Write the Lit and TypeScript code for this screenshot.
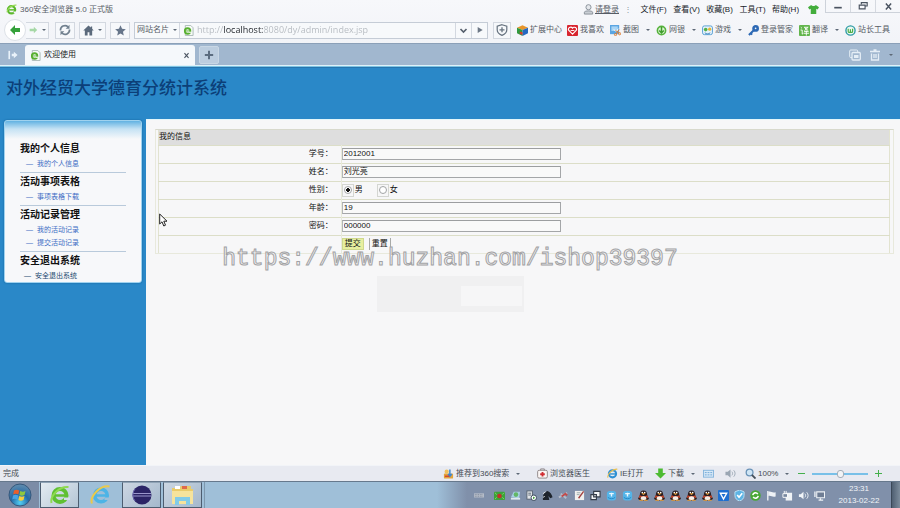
import { LitElement, html, svg, css, nothing, TemplateResult } from "lit";
import { customElement } from "lit/decorators.js";
import { classMap } from "lit/directives/class-map.js";

const icon = (body: unknown, size = 12) =>
  html`<svg width=${size} height=${size} viewBox="0 0 12 12" aria-hidden="true">${body}</svg>`;

const glyphs = {
  browser: svg`<circle cx="6" cy="6.3" r="4" fill="none" stroke="#5cb82c" stroke-width="2.4"/><path d="M2 6.4h8" stroke="#5cb82c" stroke-width="1.6"/><path d="M8.4 8.2h3v2h-3z" fill="#f4f6fa"/><path d="M1 9C2 4 7 .6 11.400 1.200" stroke="#9bdc5a" stroke-width="1.300" fill="none"/>`,
  page: svg`<path d="M2.500 .5h6l2.500 2.500v8.500h-8.500z" fill="#f6faf6" stroke="#a9b8b6"/><circle cx="5" cy="6.500" r="3" fill="#f6faf6" stroke="#58b030" stroke-width="2"/><path d="M2.500 6.500h5" stroke="#58b030"/><path d="M6 7.300h3v1.200H6z" fill="#f6faf6"/>`,
  back: svg`<path d="M1 6l5-5v3h5v4H6v3z" fill="#35a13a"/>`,
  forward: svg`<path d="M11 6L7 2v2.500H2v3h5V10z" fill="#a6d8a6"/>`,
  refresh: svg`<path d="M1.500 6.500A4.500 4.500 0 0 1 9 2.800M10.500 5.500A4.500 4.500 0 0 1 3 9.200" fill="none" stroke="#71808f" stroke-width="1.700"/><path d="M10.500 .8v4H6.700zM1.500 11.200v-4h3.800z" fill="#71808f"/>`,
  home: svg`<path d="M6 .5L.3 6H2v5.500h3V8h2v3.500h3V6h1.700L10 4.200V1.500H8.500v1.300z" fill="#5b6a7c"/>`,
  star: svg`<path d="M6 .4l1.700 3.800 4.100.4-3.100 2.700.9 4.100L6 9.300l-3.600 2.100.9-4.100L.2 4.600l4.100-.4z" fill="#66758a"/>`,
  shield: svg`<path d="M6 .7l4.800 1.600v3.500c0 2.700-2 4.500-4.800 5.600C3.200 10.300 1.200 8.500 1.200 5.800V2.300z" fill="none" stroke="#66727f" stroke-width="1.200"/><path d="M6 3.300v5M3.500 5.800h5" stroke="#66727f" stroke-width="1.300"/>`,
  chevron: svg`<path d="M2 4l4 4 4-4" fill="none" stroke="#555f6c" stroke-width="2.200"/>`,
  play: svg`<path d="M2.500 1.500L10 6l-7.500 4.500z" fill="#6c7785"/>`,
  cube: svg`<path d="M0 3l6-2.700L12 3 6 5.500z" fill="#e8952a"/><path d="M0 3l6 2.500V12L0 9z" fill="#2f9a3e"/><path d="M12 3L6 5.500V12l6-3z" fill="#2468c0"/><path d="M3 7l3 1v3L3 9.500z" fill="#d43c2c"/>`,
  heart: svg`<rect width="12" height="12" rx="1" fill="#d8252f"/><path d="M6 10L2 6a2.200 2.200 0 0 1 4-2.500A2.200 2.200 0 0 1 10 6z" fill="none" stroke="#fff" stroke-width="1.200"/><path d="M4 6h4" stroke="#fff"/>`,
  capture: svg`<rect x="0" y="0" width="10" height="10" fill="#5aa5e2"/><path d="M1.500 1.500h7v5h-7z" fill="#a8d4f4"/><path d="M4 5l3 2 2-3" stroke="#fff" fill="none"/><circle cx="6" cy="10.500" r="1.200" fill="none" stroke="#e07b2c"/><circle cx="10.500" cy="9.500" r="1.200" fill="none" stroke="#e07b2c"/><path d="M6 6l4 3M10 5l-3.500 5" stroke="#e07b2c"/>`,
  bank: svg`<circle cx="6" cy="6" r="4.500" fill="#d9f2cf" stroke="#55b23c" stroke-width="1.700"/><path d="M6 2v6M3.500 6L6 8.700 8.500 6" stroke="#3f9d2c" stroke-width="1.600" fill="none"/>`,
  game: svg`<rect x=".6" y="1" width="10.800" height="9.500" rx="2" fill="#e6f2fb" stroke="#4f9bd2"/><circle cx="4" cy="5" r="2" fill="#54b04a"/><circle cx="8.400" cy="4.500" r="1.700" fill="#e9b534"/><path d="M3 8.500c2 1.500 4 1.500 6 0" stroke="#3c83bb" fill="none"/>`,
  key: svg`<circle cx="8.300" cy="3.700" r="2.300" fill="none" stroke="#2d69b5" stroke-width="2.800"/><path d="M6.300 5.700L1 11M2.500 8.500l2 2" stroke="#2d69b5" stroke-width="2.200" fill="none"/>`,
  translate: svg`<rect width="12" height="12" rx="1" fill="#62b54d"/><path d="M2 2.500l1.200 1M1.700 5.500h1.800V10l1-1M5.500 2.500h4.500L6 6M6 3l4 3M5.500 7h5M5 9h6M8 6v5.500" stroke="#fff" fill="none"/>`,
  webmaster: svg`<circle cx="6" cy="6" r="5" fill="#ecf8f2" stroke="#2c9aa4" stroke-width="1.500"/><path d="M3.500 4v3c0 1.500 2.400 1.500 2.400 0V4.500 7c0 1.500 2.400 1.500 2.400 0V4" fill="none" stroke="#4cae45" stroke-width="1.300"/>`,
  person: svg`<circle cx="6" cy="3.500" r="2.800" fill="#e5e8ec" stroke="#868d96"/><path d="M1.500 11V9c0-2 9-2 9 0v2z" fill="#c9ced4" stroke="#868d96"/>`,
  shirt: svg`<path d="M3.500 1L0 3.500 1.500 6l1.500-.7V11h6V5.300l1.500.7L12 3.500 8.500 1C7.500 2.500 4.500 2.500 3.500 1z" fill="#43ad3c"/>`,
  minimise: svg`<path d="M1.500 8h9" stroke="#4a5360" stroke-width="2"/>`,
  restore: svg`<path d="M4 4V2h7v4H9M1.500 5h7v4.500h-7z" fill="none" stroke="#4a5360" stroke-width="1.400"/>`,
  close: svg`<path d="M2.500 2l7 8M9.500 2l-7 8" stroke="#4a5360" stroke-width="1.900"/>`,
  sidebar: svg`<path d="M1.500 1v10" stroke="#e9f2fa" stroke-width="2"/><path d="M4.500 4.500H7V2l4.500 4L7 10V7.500H4.500z" fill="#e9f2fa"/>`,
  plus: svg`<path d="M6 1v10M1 6h10" stroke="#5b6c80" stroke-width="2.400"/>`,
  windows: svg`<rect x=".7" y="1" width="8" height="7.500" rx="1" fill="none" stroke="#e5eef6"/><rect x="3" y="3.500" width="8.300" height="7.500" rx="1" fill="#a1b7cf" stroke="#e5eef6" stroke-width="1.300"/><path d="M5 6h4.500v3H5z" fill="#e5eef6"/>`,
  trash: svg`<path d="M1 2.500h10M4.500 1h3M2.500 4.500v6.500h7V4.500M5 5v4M7 5v4" stroke="#e5eef6" stroke-width="1.300" fill="none"/>`,
  share: svg`<rect x="1" y="6" width="10" height="5.500" rx="1" fill="#e4a33a"/><circle cx="4" cy="4" r="2.300" fill="#f0c05a"/><path d="M7.500 1.500v7M5.500 6.500l2 2.500 2-2.500" stroke="#3e86cf" stroke-width="1.600" fill="none"/><path d="M2 9h5" stroke="#d0442f" stroke-width="1.500"/>`,
  doctor: svg`<rect x=".7" y="2.500" width="10.600" height="8.500" rx="1.500" fill="#fbf5f4" stroke="#8d8587"/><path d="M4 2.500V1h4v1.500" stroke="#8d8587" fill="none"/><path d="M6 4.300v5M3.500 6.800h5" stroke="#d02d33" stroke-width="2"/>`,
  ie: svg`<circle cx="6" cy="6.300" r="3.900" fill="none" stroke="#2e8fd3" stroke-width="2.300"/><path d="M2.500 6.500h7.500" stroke="#2e8fd3" stroke-width="1.500"/><path d="M1 10.500C0 7 6 .6 11.300 1.300" stroke="#edc04b" stroke-width="1.200" fill="none"/>`,
  download: svg`<path d="M3.500 .5h5v5H12l-6 6-6-6h3.500z" fill="#4dbb33"/>`,
  card: svg`<rect x=".5" y="2.500" width="11" height="7.500" fill="#d7e8f6" stroke="#84b4dc"/><path d="M2 5h8M2 7.500h8" stroke="#6ba4d6" stroke-dasharray="2 1"/>`,
  speaker: svg`<path d="M.5 4h2.500L6 1.500v9L3 8H.5z" fill="#9aa6b3"/><path d="M7.500 4c1 1 1 3 0 4M9.500 2.500c2 2 2 5 0 7" stroke="#9aa6b3" fill="none"/>`,
  zoom: svg`<circle cx="5" cy="5" r="3.700" fill="#cfe5f5" stroke="#6a93b8" stroke-width="1.400"/><path d="M7.500 7.500l4 4" stroke="#454f5a" stroke-width="2"/>`,
};

const tray = {
  keyboard: svg`<rect x="0" y="4" width="12" height="5" fill="#b5bcc8"/><path d="M1 5.500h10M1 7.500h10" stroke="#737f92" stroke-dasharray="1 1"/>`,
  flower: svg`<rect y="2" width="12" height="9" rx="1" fill="#3fa13a"/><circle cx="6" cy="6.500" r="2.500" fill="#c4302c"/><path d="M1 3l2 2M11 3L9 5M1 10l2-2M11 10L9 8" stroke="#7fe268"/>`,
  disk: svg`<path d="M1 8l3-6h7l-1 7z" fill="#a7cfe4"/><circle cx="6.500" cy="5" r="2.500" fill="#63b766"/><path d="M1 9.500h10" stroke="#dfe9ef" stroke-width="2"/>`,
  server: svg`<rect x="1" y="1" width="6" height="9" fill="#e2e5e8" stroke="#576270"/><path d="M2.500 3.500h3M2.500 5.500h3" stroke="#576270"/><circle cx="8.500" cy="8.500" r="3" fill="#fff" stroke="#345"/><path d="M7.700 7v3l2.300-1.500z" fill="#3c9936"/>`,
  horse: svg`<path d="M1 11c0-5 0-8 5-10 3 1 5 4 5.500 7L9 9 7 6.500 8 11z" fill="#1e242d"/><path d="M1 4l3-2M1 8l2-1" stroke="#e8edf2"/>`,
  pinRed: svg`<path d="M1 8l9-5M3 4l6 5" stroke="#b6bcc9" stroke-width="2"/><path d="M4 7l4-3 2 2" stroke="#c24b4b" stroke-width="2" fill="none"/>`,
  note: svg`<path d="M1 1h10v10H1z" fill="#f0f0ee"/><path d="M3 3h4M3 5h3" stroke="#9aa"/><path d="M10.500 1.500L5 9" stroke="#a34340" stroke-width="1.500"/>`,
  copies: svg`<path d="M4 1.500h7v6H4zM1 5h6v5.500H1z" fill="#f4f6f8" stroke="#343c49" stroke-width="1.200"/>`,
  drop: svg`<rect x="1" y="1" width="10" height="10.500" rx="3" fill="#54b4e8"/><path d="M3.500 4h5M6 3v4" stroke="#e9f7ff" stroke-width="1.500"/><path d="M2 8c2 2 6 2 8 0" stroke="#2687c4" fill="none"/>`,
  penguin: svg`<path d="M6 .5c3 0 4 2 4 5l2 4-1.500 1.500c-1 1-8 1-9 0L0 9.500l2-4c0-3 1-5 4-5z" fill="#2b1f22"/><path d="M1.800 5.600c2.500 1.400 6 1.400 8.400 0l1.200 3.400c-2.500-1.500-8-1.500-10.800 0z" fill="#c9472c"/><ellipse cx="6" cy="9" rx="3" ry="2.300" fill="#f4efe9"/><path d="M3.500 3.600h5L6 5.400zM1.500 10.500h4v1.200h-4zM6.500 10.500h4v1.200h-4z" fill="#efa53c"/><circle cx="4.700" cy="2.700" r=".9" fill="#fff"/><circle cx="7.300" cy="2.700" r=".9" fill="#fff"/>`,
  blue: svg`<rect width="12" height="12" rx="1" fill="#1f6fd0"/><path d="M2.500 3.500h7L6 10z" fill="none" stroke="#fff" stroke-width="1.500"/>`,
  guard: svg`<path d="M6 0l5 2v4c0 3-2 5-5 6-3-1-5-3-5-6V2z" fill="#5db4e4"/><path d="M6 0l5 2v4c0 3-2 5-5 6-3-1-5-3-5-6V2z" fill="none" stroke="#bfe4f6"/><path d="M3.500 5.500L5.500 8l3.500-4.500" stroke="#fff" stroke-width="1.700" fill="none"/>`,
  safe: svg`<circle cx="6" cy="6" r="5.700" fill="#49a935"/><path d="M3 5.500a3 3 0 0 1 5.500-1M9 6.500a3 3 0 0 1-5.500 1" stroke="#fff" stroke-width="1.700" fill="none"/>`,
  flag: svg`<path d="M2 1v10.500" stroke="#fff" stroke-width="1.300"/><path d="M2.500 2c3-1 4 1.500 8 .5V7c-4 1-5-1.500-8-.5z" fill="#eef2f6"/>`,
  plug: svg`<rect x="4" y="3" width="7" height="8.500" fill="#f0f3f6"/><path d="M1 4h5v4H1zM2.500 1v3M4.500 1v3" stroke="#fff" fill="#78889f"/>`,
  sound: svg`<path d="M1 4.500h2L6 2v8L3 7.500H1z" fill="#f0f4f8"/><path d="M7.500 4c1 1 1 3 0 4M9.500 2.500c2 2 2 5 0 7" stroke="#f0f4f8" fill="none"/>`,
  network: svg`<path d="M3 2h8.500v6.500H3z" fill="#6e7d94" stroke="#eef2f6" stroke-width="1.200"/><path d="M5 11h5M7 9v2M1 1.500v6" stroke="#eef2f6" stroke-width="1.400"/>`,
};

const trayOrder: unknown[] = [
  tray.flower, tray.disk, tray.server, tray.horse, tray.pinRed, tray.note, tray.copies,
  tray.drop, tray.drop, tray.penguin, tray.penguin, tray.penguin, tray.penguin, tray.penguin,
  tray.blue, tray.guard, tray.safe, tray.flag, tray.plug, tray.sound, tray.network,
];

const resets = css`
  * { box-sizing: border-box; }
  svg { display: block; flex: none; }
  button, input { font: inherit; color: inherit; margin: 0; padding: 0; border: 0; background: none; }
  a { color: inherit; text-decoration: none; }
  button { display: flex; align-items: center; justify-content: center; white-space: nowrap; }
  .caret { flex: none; width: 0; height: 0; border: 2px solid transparent; border-top-color: #5d6876; border-bottom: 0; }
`;

@customElement("browser-chrome")
class BrowserChrome extends LitElement {
  static styles = [resets, css`
    :host { display: block; color: #565c65; background: linear-gradient(#f7f8fb, #eff1f6); }
    .titlebar { display: flex; align-items: center; height: 19px; padding-left: 6px; white-space: nowrap; }
    .title { margin-left: 3px; flex: 1; }
    .login { gap: 1px; width: 36px; text-decoration: underline; }
    .sep { width: 18px; text-align: center; color: #8d949d; }
    .menu { width: 33px; color: #20242a; }
    .skin { width: 23px; }
    .window { display: flex; width: 75px; height: 13px; align-self: flex-start; border: 1px solid #cdd2da; border-top: 0; border-right: 0; }
    .window button { flex: 1; border-left: 1px solid #d5d9e0; }
    .window button:first-child { border-left: 0; }
    .toolbar { display: flex; align-items: center; height: 24px; padding: 0 8px 2px 4px; }
    .back { width: 22px; height: 22px; border-radius: 50%; background: #fff; border: 1px solid #dde1e7; }
    .nav { height: 17px; border: 1px solid #d3d8e0; background: #f6f8fb; gap: 4px; }
    .forward { width: 23px; border-left: 0; margin-right: 6px; }
    .refresh { width: 20px; margin-right: 4px; }
    .home { width: 27px; margin-right: 4px; }
    .fav { width: 20px; margin-right: 4px; }
    .address { display: flex; align-items: stretch; flex: 1; min-width: 0; height: 17px; border: 1px solid #c5ccd6; background: #f7f9fb; }
    .card { width: 45px; gap: 4px; border-right: 1px solid #d3d8e0; }
    .favicon { display: flex; align-items: center; width: 17px; padding-left: 3px; }
    .url { flex: 1; min-width: 0; font-family: "Open Sans", sans-serif; font-size: 9px; color: transparent; -webkit-background-clip: text; background-clip: text;
      background-image: linear-gradient(90deg, #b4b9bf 27px, #1f242a 27px, #1f242a 66px, #b4b9bf 66px); }
    .go { width: 16px; border-left: 1px solid #d3d8e0; }
    .shield { width: 18px; margin: 0 6px 0 5px; }
    .tools { display: flex; align-items: center; }
    .tool { gap: 2px; justify-content: flex-start; }
    .tool .caret { margin-left: 5px; }
    .tabs { display: flex; align-items: flex-end; height: 22px; background: #a1b7cf; border-top: 1px solid #8ba0b8; }
    .toggle { width: 25px; height: 20px; }
    .tab { display: flex; align-items: center; width: 170px; height: 20px; padding: 0 5px; gap: 3px; background: #f5f8fb; border-radius: 3px 3px 0 0; color: #222; }
    .tab-title { flex: 1; }
    .add { width: 20px; height: 18px; margin: 0 auto 1px 4px; background: #bccddf; border: 1px solid #c9d7e5; border-radius: 2px; }
    .tab-actions { display: flex; align-items: center; height: 20px; gap: 8px; padding-right: 7px; }
    .line { height: 2px; background: #7dc4e4; border-top: 1px solid #dff1f8; }
  `];

  tool(glyph: unknown, label: string, width: number, caret = false) {
    return html`<button class="tool" style="width:${width}px">${icon(glyph, 11)}<span>${label}</span>${caret ? html`<span class="caret"></span>` : nothing}</button>`;
  }

  render() {
    return html`
      <div class="titlebar">
        ${icon(glyphs.browser, 11)}<span class="title">360安全浏览器 5.0 正式版</span>
        <button class="login">${icon(glyphs.person, 11)}<span>请登录</span></button>
        <span class="sep">⋮</span>
        ${["文件(F)", "查看(V)", "收藏(B)", "工具(T)", "帮助(H)"].map((m) => html`<button class="menu">${m}</button>`)}
        <button class="skin" aria-label="皮肤">${icon(glyphs.shirt, 11)}</button>
        <div class="window">
          <button aria-label="最小化">${icon(glyphs.minimise, 10)}</button>
          <button aria-label="还原">${icon(glyphs.restore, 10)}</button>
          <button aria-label="关闭">${icon(glyphs.close, 9)}</button>
        </div>
      </div>
      <div class="toolbar">
        <button class="back" aria-label="后退">${icon(glyphs.back, 12)}</button>
        <button class="nav forward" aria-label="前进">${icon(glyphs.forward, 10)}<span class="caret"></span></button>
        <button class="nav refresh" aria-label="刷新">${icon(glyphs.refresh)}</button>
        <button class="nav home" aria-label="主页">${icon(glyphs.home, 11)}<span class="caret"></span></button>
        <button class="nav fav" aria-label="收藏">${icon(glyphs.star, 11)}</button>
        <div class="address">
          <button class="card">网站名片<span class="caret"></span></button>
          <span class="favicon">${icon(glyphs.page, 11)}</span>
          <input class="url" aria-label="地址" value="http://localhost:8080/dy/admin/index.jsp" />
          <button class="go" aria-label="历史">${icon(glyphs.chevron, 9)}</button>
          <button class="go" aria-label="转到">${icon(glyphs.play, 8)}</button>
        </div>
        <button class="nav shield" aria-label="安全">${icon(glyphs.shield)}</button>
        <div class="tools">
          ${this.tool(glyphs.cube, "扩展中心", 50)}
          ${this.tool(glyphs.heart, "我喜欢", 43)}
          ${this.tool(glyphs.capture, "截图", 46, true)}
          ${this.tool(glyphs.bank, "网银", 46, true)}
          ${this.tool(glyphs.game, "游戏", 46, true)}
          ${this.tool(glyphs.key, "登录管家", 51)}
          ${this.tool(glyphs.translate, "翻译", 46, true)}
          ${this.tool(glyphs.webmaster, "站长工具", 47)}
        </div>
      </div>
      <div class="tabs">
        <button class="toggle" aria-label="侧栏">${icon(glyphs.sidebar, 10)}</button>
        <div class="tab">${icon(glyphs.page, 11)}<span class="tab-title">欢迎使用</span><button aria-label="关闭标签">${icon(glyphs.close, 7)}</button></div>
        <button class="add" aria-label="新标签">${icon(glyphs.plus, 10)}</button>
        <div class="tab-actions">
          <button aria-label="窗口">${icon(glyphs.windows)}</button>
          <button aria-label="清除">${icon(glyphs.trash)}</button>
          <span class="caret"></span>
        </div>
      </div>
      <div class="line"></div>
    `;
  }
}

interface MenuGroup { title: string; links: string[]; active?: boolean }

@customElement("side-menu")
class SideMenu extends LitElement {
  static styles = [resets, css`
    :host { display: block; padding: 1px 4px 0; }
    .box { padding: 19px 15px 0; border: 1px solid #9fd2ef; border-radius: 3px; box-shadow: 0 0 2px #12609a;
      background: linear-gradient(#62b2e2, #c5e2f4 8px, #f7f8fa 18px); }
    .group { border-bottom: 1px solid #b9cadb; padding-bottom: 2px; }
    .group:last-child { padding-bottom: 0; border-bottom: 0; }
    .heading { margin: 0; font-size: 10px; line-height: 17px; font-weight: 700; color: #111; }
    .links { list-style: none; margin: 0; padding: 0 0 0 6px; }
    .link { display: flex; gap: 4px; font-size: 7px; line-height: 13px; color: #3c6cc4; }
    .active .links { padding-left: 4px; }
    .active .link { color: #1c4a70; }
  `];

  groups: MenuGroup[] = [
    { title: "我的个人信息", links: ["我的个人信息"] },
    { title: "活动事项表格", links: ["事项表格下载"] },
    { title: "活动记录管理", links: ["我的活动记录", "提交活动记录"] },
    { title: "安全退出系统", links: ["安全退出系统"], active: true },
  ];

  render() {
    return html`<nav class="box">${this.groups.map((g) => html`
      <section class=${classMap({ group: true, active: !!g.active })}>
        <h2 class="heading">${g.title}</h2>
        <ul class="links">${g.links.map((l) => html`<li><a class="link" href="#"><span>—</span>${l}</a></li>`)}</ul>
      </section>`)}</nav>`;
  }
}

@customElement("info-form")
class InfoForm extends LitElement {
  static styles = [resets, css`
    :host { display: block; padding: 9px 6px 0 9px; color: #111; }
    .form { padding: 0 3px 0 2px; border: 1px solid #e8e9dc; border-top-color: #d8d9cc; }
    .info { width: 100%; border-collapse: collapse; table-layout: fixed; border: 1px solid #e2e3d0; border-width: 0 1px; }
    .caption { height: 15px; padding: 0; text-align: left; font-weight: 400; background: #dedede; }
    .row { height: 18px; border-top: 1px solid #dcdec8; }
    .label { padding: 0 8px 0 0; text-align: right; font-weight: 400; border-right: 1px solid #e8eadb; }
    .field { padding: 0; }
    .text { display: block; width: 40%; height: 12px; padding: 0 1px; border: 1px solid #b4b6b8; border-color: #9c9ea0 #a4a6a8 #a4a6a8 #b4b6b8; background: #f9f9f9; }
    .choices { display: flex; gap: 14px; }
    .choice { display: flex; align-items: center; gap: 1px; }
    .radio-box { display: flex; align-items: center; justify-content: center; width: 12px; height: 13px; border: 1px solid #d4d6d2; }
    .radio { appearance: none; width: 8px; height: 8px; border: 1px solid #a2a4a6; border-radius: 50%; background: #fff; }
    .radio:checked { background: radial-gradient(#111 0 2px, #fff 2px); }
    .actions { display: flex; gap: 5px; }
    .btn { width: 22px; height: 12px; border: 1px solid #a8aaa8; border-width: 0 1px; line-height: 12px; }
    .submit { background: #e6efa0; border: 1px solid #cfd88c; }
    .ghost { width: 147px; height: 36px; margin: 22px 0 0 30%; padding: 10px 2px 6px 84px; background: #f0f0f1; }
    .patch { height: 20px; background: #f6f6f7; }
  `];

  fields = [
    { id: "sno", label: "学号：", value: "2012001" },
    { id: "name", label: "姓名：", value: "刘光亮" },
    { id: "sex", label: "性别：" },
    { id: "age", label: "年龄：", value: "19" },
    { id: "pwd", label: "密码：", value: "000000" },
  ];

  control(f: { id: string; value?: string }): TemplateResult {
    if (f.value !== undefined) return html`<input class="text" id=${f.id} type="text" .value=${f.value} />`;
    return html`<div class="choices">
      <label class="choice"><span class="radio-box"><input class="radio" id=${f.id} type="radio" name="sex" checked /></span>男</label>
      <label class="choice"><span class="radio-box"><input class="radio" type="radio" name="sex" /></span>女</label>
    </div>`;
  }

  render() {
    return html`
      <form class="form" @submit=${(e: Event) => e.preventDefault()}>
        <table class="info">
          <colgroup><col style="width:25%" /><col /></colgroup>
          <thead><tr><th class="caption" colspan="2">我的信息</th></tr></thead>
          <tbody>
            ${this.fields.map((f) => html`<tr class="row"><th class="label"><label for=${f.id}>${f.label}</label></th><td class="field">${this.control(f)}</td></tr>`)}
            <tr class="row"><th class="label"></th><td class="field"><div class="actions">
              <button class="btn submit" type="submit">提交</button><button class="btn" type="reset">重置</button>
            </div></td></tr>
          </tbody>
        </table>
      </form>
      <div class="ghost"><div class="patch"></div></div>
    `;
  }
}

@customElement("status-bar")
class StatusBar extends LitElement {
  static styles = [resets, css`
    :host { display: flex; align-items: center; height: 16px; padding: 0 18px 0 3px; color: #454b54; background: #e8eaf1; border-top: 1px solid #f2f4f8; white-space: nowrap; }
    .state { flex: 1; }
    .item { gap: 2px; justify-content: flex-start; }
    .item .caret { margin-left: 5px; }
    .minus, .plus { width: 7px; }
    .slider { appearance: none; width: 56px; height: 10px; margin: 0 7px; background: linear-gradient(#78c0e8, #78c0e8) center / 100% 2px no-repeat; }
    .slider::-webkit-slider-thumb { appearance: none; width: 7px; height: 8px; border-radius: 3px; background: #f2f4f6; border: 1px solid #a3adb8; }
  `];

  item(glyph: unknown, label: string, width: number, caret = false) {
    return html`<button class="item" style="width:${width}px">${icon(glyph, 11)}${label ? html`<span>${label}</span>` : nothing}${caret ? html`<span class="caret"></span>` : nothing}</button>`;
  }

  render() {
    return html`
      <span class="state">完成</span>
      ${this.item(glyphs.share, "推荐到360搜索", 94, true)}
      ${this.item(glyphs.doctor, "浏览器医生", 70)}
      ${this.item(glyphs.ie, "IE打开", 48)}
      ${this.item(glyphs.download, "下载", 48, true)}
      ${this.item(glyphs.card, "", 22)}
      ${this.item(glyphs.speaker, "", 20)}
      ${this.item(glyphs.zoom, "100%", 53, true)}
      <button class="minus" aria-label="缩小"><svg width="7" height="7"><path d="M0 3.500h7" stroke="#44b04c" stroke-width="1"/></svg></button>
      <input class="slider" type="range" min="0" max="100" value="50" aria-label="缩放" />
      <button class="plus" aria-label="放大"><svg width="7" height="7"><path d="M0 3.500h7M3.500 0v7" stroke="#44b04c" stroke-width="1"/></svg></button>
    `;
  }
}

@customElement("task-bar")
class TaskBar extends LitElement {
  static styles = [resets, css`
    :host { display: flex; height: 27px; background: #9fbfd8; border-top: 1px solid #66788c; }
    .start { width: 39px; background: #7c8ca6; }
    .app { width: 39px; margin-left: 2px; border: 1px solid #4d5d70; border-top-color: #8fa3b6; background: linear-gradient(135deg, #e4ebf1, #b4c5d5); }
    .app.dim { background: linear-gradient(135deg, #ccd6e2, #a4b8cc); }
    .app.flat { border-color: transparent; background: none; }
    .start + .app { margin-left: 1px; }
    .space { flex: 1; border-left: 1px solid #7d97ad; margin-left: 2px; background: linear-gradient(90deg, #9fbfd8 calc(100% - 30px), #8090aa); }
    .tray { display: flex; align-items: center; background: #8090aa; }
    .cell { display: flex; justify-content: center; width: 16px; }
    .cell.wide { width: 24px; }
    .clock { width: 64px; text-align: center; line-height: 12px; color: #f2f5f9; }
    .desktop { width: 9px; align-self: stretch; background: linear-gradient(90deg, #4f5f72, #7c8c9c); border-left: 1px solid #3b4858; }
  `];

  render() {
    return html`
      <button class="start" aria-label="开始"><svg width="24" height="24" viewBox="0 0 24 24">
        <defs><radialGradient id="orb" cx=".5" cy=".85" r=".8"><stop offset="0" stop-color="#52d0f4"/><stop offset=".5" stop-color="#246aa6"/><stop offset="1" stop-color="#5c89ad"/></radialGradient></defs>
        <circle cx="12" cy="12" r="11" fill="url(#orb)" stroke="#36587c"/>
        <path d="M6 7.500c2-1.200 3.500-1 5.200 0l-.8 4c-1.800-1-3.500-1-5.200 0z" fill="#e8602c"/><path d="M12.200 8c2 1 3.500 1 5.300 0l-1 4c-1.800 1-3.500 1-5.100 0z" fill="#90c83e"/><path d="M5 12.500c2-1.200 3.500-1 5.200 0l-.8 4c-1.800-1-3.500-1-5.200 0z" fill="#4aa4e4"/><path d="M11.200 13c2 1 3.500 1 5.300 0l-1 4c-1.800 1-3.500 1-5.100 0z" fill="#f8ce3c"/></svg></button>
      <button class="app" aria-label="360安全浏览器"><svg width="20" height="20" viewBox="0 0 20 20"><circle cx="10" cy="10.500" r="6.500" fill="none" stroke="#5fc032" stroke-width="4"/><path d="M4 10.500h13" stroke="#5fc032" stroke-width="2.500"/><path d="M14 12.500h6v2.500h-6z" fill="#d3dde6"/><path d="M1.500 18C0 11 9 1 18.500 2" fill="none" stroke="#8fda52" stroke-width="2"/></svg></button>
      <button class="app flat" aria-label="Internet Explorer"><svg width="21" height="20" viewBox="0 0 20 20"><circle cx="10.500" cy="10.500" r="6.300" fill="none" stroke="#4db4e6" stroke-width="3.600"/><path d="M5 10.500h12" stroke="#4db4e6" stroke-width="2.500"/><path d="M14 12.500h6v2.500h-6z" fill="#9fbfd8"/><path d="M1.500 18.500C-1 12 9 0 19 1.500" fill="none" stroke="#e9c94c" stroke-width="2"/></svg></button>
      <button class="app dim" aria-label="Eclipse"><svg width="20" height="20" viewBox="0 0 20 20"><circle cx="10" cy="10" r="9.500" fill="#2b2466"/><path d="M1 8.500h18M.8 11h18.400" stroke="#9a96cc"/><path d="M3 4a9.500 9.500 0 0 0 0 12" stroke="#6a66ae" fill="none"/></svg></button>
      <button class="app dim" aria-label="资源管理器"><svg width="23" height="21" viewBox="0 0 23 21"><path d="M1 3h7l2-2h10v3h2v15H1z" fill="#eacb6a"/><path d="M4 1h5v3H4z" fill="#fff"/><path d="M11 1h5v3h-5z" fill="#e06a4a"/><path d="M1 6h21v13H1z" fill="#f6e39c"/><path d="M4 20v-8h15v8h-4v-4H8v4z" fill="#82cbe8"/></svg></button>
      <div class="space"></div>
      <div class="tray">
        <span class="cell wide">${icon(tray.keyboard, 10)}</span>
        ${trayOrder.map((t) => html`<span class="cell">${icon(t, 11)}</span>`)}
        <time class="clock">23:31<br />2013-02-22</time>
        <button class="desktop" aria-label="显示桌面"></button>
      </div>
    `;
  }
}

@customElement("app-root")
class AppRoot extends LitElement {
  static styles = [resets, css`
    :host { position: relative; display: flex; flex-direction: column; min-height: 100vh; overflow: hidden;
      font: 8px/12px "Liberation Sans", "Noto Sans CJK SC", sans-serif; background: #f7f7f8; }
    .header { height: 52px; padding: 9px 6px; background: #2a88c8; border-top: 1px solid #2775ae; }
    .system { margin: 0; font-size: 17px; line-height: 24px; font-weight: 500; color: #0c3f78; font-family: "Liberation Serif", "Noto Sans CJK SC", serif; }
    .body { position: relative; flex: 1; display: grid; grid-template-columns: 146px 1fr; background: #2a88c8; }
    .main { background: #f7f7f8; border-top: 1px solid #e3f6fa; }
    .pointer { position: absolute; left: 159px; top: 94px; }
    .watermark { position: absolute; inset: 128px 0 auto; text-align: center; font: 23px/24px "Liberation Mono", monospace;
      color: #f7f7f8; -webkit-text-stroke: 1px #a2a2a4; pointer-events: none; }
  `];

  render() {
    return html`
      <browser-chrome></browser-chrome>
      <header class="header"><h1 class="system">对外经贸大学德育分统计系统</h1></header>
      <div class="body">
        <side-menu></side-menu>
        <main class="main"><info-form></info-form></main>
        <div class="watermark">https://www.huzhan.com/ishop39397</div>
        <svg class="pointer" width="9" height="14" viewBox="0 0 9 14" aria-hidden="true"><path d="M.7 1v10l2.300-2.200L4.800 13l1.700-.8-1.700-4H8z" fill="#fff" stroke="#222"/></svg>
      </div>
      <status-bar></status-bar>
      <task-bar></task-bar>
    `;
  }
}
